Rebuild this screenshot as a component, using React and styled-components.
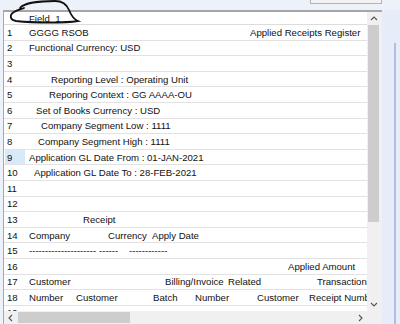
import React from 'react';
import styled, { createGlobalStyle } from 'styled-components';

const GlobalStyle = createGlobalStyle`
  html, body {
    margin: 0;
    padding: 0;
    background: #edf1f9;
    overflow: hidden;
  }
  body {
    font-family: "Liberation Sans", Arial, sans-serif;
    font-size: 9.6px;
    color: #111;
  }
`

const Page = styled.div`
  position: relative;
  width: 400px;
  height: 324px;
  overflow: hidden;
  display: flex;
  flex-direction: column;
`

const TopBar = styled.div`
  height: 10px;
  display: flex;
  justify-content: flex-end;
  align-items: flex-start;
  padding-right: 18px;
  box-sizing: border-box;
`

const ButtonStub = styled.div`
  width: 72px;
  height: 4px;
  box-sizing: border-box;
  border: 1px solid #b4b4b4;
  border-top: none;
  background: #f2f2f2;
`

const Main = styled.div`
  flex: 1;
  display: flex;
  padding-left: 3px;
  min-height: 0;
`

const Frame = styled.div`
  width: 379px;
  display: flex;
  flex-direction: column;
  border-top: 2px solid #a6a6a6;
  border-left: 1px solid #a9a9a9;
  background: #f0f0f0;
  box-sizing: border-box;
`

const Body = styled.div`
  flex: 1;
  display: flex;
  min-height: 0;
`

const Viewport = styled.div`
  width: 363px;
  background: #fff;
  overflow: hidden;
  white-space: nowrap;
`

const HeaderRow = styled.div`
  height: 13px;
  box-sizing: border-box;
  display: flex;
  align-items: center;
  border-bottom: 1px solid #dcdcdc;
  padding-left: 25px;
  white-space: pre;
`

const Row = styled.div`
  height: 15.6px;
  box-sizing: border-box;
  display: flex;
  align-items: center;
  border-bottom: 1px solid #e2e2e2;
`

const NumCell = styled.div`
  width: 20px;
  height: 100%;
  margin: 0 1px;
  padding-left: 2px;
  box-sizing: border-box;
  display: flex;
  align-items: center;
  flex-shrink: 0;
  background: ${p => (p.$selected ? '#d8e9f9' : 'transparent')};
`

const Content = styled.div`
  display: flex;
  align-items: center;
  padding-left: ${p => 3 + (p.$indent || 0)}px;
`

const Seg = styled.span`
  display: inline-block;
  flex-shrink: 0;
  width: ${p => (p.$w ? `${p.$w}px` : 'auto')};
  white-space: pre;
`

const VScroll = styled.div`
  width: 13px;
  display: flex;
  flex-direction: column;
  align-items: center;
  background: #f0f0f0;
`

const ArrowBox = styled.div`
  width: 13px;
  height: 13px;
  display: flex;
  align-items: center;
  justify-content: center;
  flex-shrink: 0;
`

const VThumb = styled.div`
  width: 11px;
  height: 197px;
  background: #cdcdcd;
`

const Spacer = styled.div`
  flex: 1;
`

const BottomRow = styled.div`
  height: 13px;
  display: flex;
  background: #f0f0f0;
`

const HScroll = styled.div`
  width: 363px;
  display: flex;
  align-items: center;
`

const HThumb = styled.div`
  width: 112px;
  height: 11px;
  margin-left: 1px;
  background: #cdcdcd;
`

const Corner = styled.div`
  width: 13px;
  background: #f0f0f0;
`

const RightStrip = styled.div`
  flex: 1;
  display: flex;
  padding-left: 12px;
  background: #e7edf8;
`

const StripLine = styled.div`
  width: 2px;
  margin-top: 33px;
  background: #aebfdf;
`

const Scribble = styled.svg`
  position: absolute;
  left: 0;
  top: 0;
  pointer-events: none;
`

const Chevron = ({ dir }) => {
  const pts = {
    up: '1,5 4,2 7,5',
    down: '1,2 4,5 7,2',
    left: '5,1 2,4 5,7',
    right: '2,1 5,4 2,7',
  }[dir]
  return (
    <svg width="8" height="8" viewBox="0 0 8 8">
      <polyline points={pts} fill="none" stroke="#555" strokeWidth="1.1" />
    </svg>
  )
}

const rows = [
  { n: 1, segs: [['GGGG RSOB', 221], ['Applied Receipts Register']] },
  { n: 2, segs: [['Functional Currency: USD']] },
  { n: 3 },
  { n: 4, indent: 22, segs: [['Reporting Level : Operating Unit']] },
  { n: 5, indent: 20, segs: [['Reporing Context : GG AAAA-OU']] },
  { n: 6, indent: 7, segs: [['Set of Books Currency : USD']] },
  { n: 7, indent: 12, segs: [['Company Segment Low : 1111']] },
  { n: 8, indent: 9, segs: [['Company Segment High : 1111']] },
  { n: 9, selected: true, segs: [['Application GL Date From : 01-JAN-2021']] },
  { n: 10, indent: 5, segs: [['Application GL Date To : 28-FEB-2021']] },
  { n: 11 },
  { n: 12 },
  { n: 13, indent: 54, segs: [['Receipt']] },
  { n: 14, segs: [['Company', 79], ['Currency', 44], ['Apply Date']] },
  { n: 15, segs: [['---------------------', 70], ['------', 30], ['------------']] },
  { n: 16, indent: 259, segs: [['Applied Amount']] },
  { n: 17, segs: [['Customer', 136], ['Billing/Invoice', 63], ['Related', 89], ['Transaction']] },
  { n: 18, segs: [['Number', 47], ['Customer', 77], ['Batch', 42], ['Number', 62], ['Customer', 52], ['Receipt Number']] },
  { n: 19 },
]

export default function App() {
  return (
    <>
      <GlobalStyle />
      <Page>
        <TopBar>
          <ButtonStub />
        </TopBar>
        <Main>
          <Frame>
            <Body>
              <Viewport>
                <HeaderRow>Field  1</HeaderRow>
                {rows.map(r => (
                  <Row key={r.n}>
                    <NumCell $selected={r.selected}>{r.n}</NumCell>
                    <Content $indent={r.indent}>
                      {(r.segs || []).map(([t, w], i) => (
                        <Seg key={i} $w={w}>{t}</Seg>
                      ))}
                    </Content>
                  </Row>
                ))}
              </Viewport>
              <VScroll>
                <ArrowBox><Chevron dir="up" /></ArrowBox>
                <VThumb />
                <Spacer />
                <ArrowBox><Chevron dir="down" /></ArrowBox>
              </VScroll>
            </Body>
            <BottomRow>
              <HScroll>
                <ArrowBox><Chevron dir="left" /></ArrowBox>
                <HThumb />
                <Spacer />
                <ArrowBox><Chevron dir="right" /></ArrowBox>
              </HScroll>
              <Corner />
            </BottomRow>
          </Frame>
          <RightStrip>
            <StripLine />
          </RightStrip>
        </Main>
        <Scribble width="100" height="30" viewBox="0 0 100 30">
          <path
            d="M20 8 C24 3, 40 1, 55 1 C63 1, 67 5, 69 10 C71 15, 73 19, 78 21 C65 23, 35 23, 16 21 C10 20, 9 15, 14 12 C17 10, 22 9, 24 8"
            fill="none"
            stroke="#111"
            strokeWidth="1.8"
            strokeLinecap="round"
          />
        </Scribble>
      </Page>
    </>
  )
}
